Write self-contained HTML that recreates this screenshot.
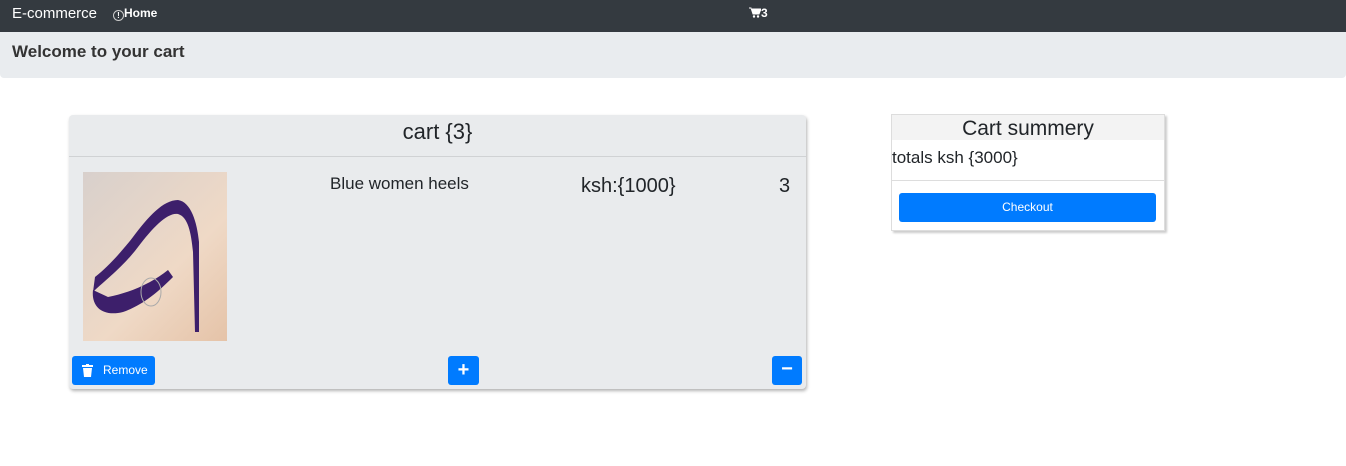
<!DOCTYPE html>
<html><head><style>
*{box-sizing:border-box;margin:0;padding:0}
body{width:1346px;height:466px;background:#fff;font-family:"Liberation Sans",sans-serif;color:#212529;position:relative;overflow:hidden}
.nav{position:absolute;left:0;top:0;width:1346px;height:32px;background:#343a40;color:#fff}
.abs{position:absolute}
.btn{position:absolute;background:#007bff;border-radius:3px;color:#fff}
</style></head><body>
<div class="nav">
<div class="abs" style="left:12px;top:5px;font-size:15px">E-commerce</div>
<div class="abs" style="left:113px;top:6px;font-size:12px;font-weight:bold"><span style="display:inline-block;width:11px;height:11px;border:1px solid #ccc;border-radius:50%;font-size:8px;line-height:9px;text-align:center;vertical-align:-1px">!</span>Home</div>
<div class="abs" style="left:749px;top:6px;font-size:12px;font-weight:bold"><svg width="12" height="11" viewBox="0 0 12 11" style="vertical-align:-1px"><path d="M0 1h2l2 6h6l2-5H3" fill="#fff" stroke="#fff"/><circle cx="5" cy="9.5" r="1.2" fill="#fff"/><circle cx="9" cy="9.5" r="1.2" fill="#fff"/></svg>3</div>
</div>
<div class="abs" style="left:0;top:32px;width:1346px;height:46px;background:#e9ecef;border-radius:0 0 4px 4px"></div>
<div class="abs" style="left:12px;top:42px;font-size:17px;font-weight:bold;color:#333">Welcome to your cart</div>

<div class="abs" style="left:69px;top:115px;width:737px;height:274px;background:#e9ebed;border-radius:4px;box-shadow:1px 2px 3px rgba(0,0,0,.3)">
<div style="height:42px;border-bottom:1px solid #d0d2d4;text-align:center;font-size:22px;line-height:34px">cart {3}</div>
<div class="abs" style="left:14px;top:57px;width:144px;height:169px;background:linear-gradient(135deg,#d8d0cc,#efd9c6 60%,#e5c3a8)">
<svg width="144" height="169" viewBox="0 0 144 169"><path d="M10 120 C20 110 40 95 55 75 C70 55 85 40 95 42 C105 45 108 60 110 80 L112 160 L116 160 L116 70 C114 50 108 30 95 28 C80 28 65 45 50 65 C40 78 25 95 12 105 Z" fill="#3d1f6b"/><path d="M10 118 C8 135 20 145 40 140 C60 133 75 120 90 105 L85 98 C70 110 50 120 25 125 Z" fill="#3d1f6b"/><ellipse cx="68" cy="120" rx="10" ry="14" fill="none" stroke="#aaa"/></svg></div>
<div class="abs" style="left:261px;top:59px;font-size:17px">Blue women heels</div>
<div class="abs" style="left:512px;top:60px;font-size:20px">ksh:{1000}</div>
<div class="abs" style="left:710px;top:60px;font-size:20px">3</div>
<div class="btn" style="left:3px;top:241px;width:83px;height:29px;font-size:12px;line-height:29px;padding-left:31px"><svg class="abs" style="left:10px;top:8px" width="11" height="13" viewBox="0 0 11 13"><rect x="0" y="1" width="11" height="2" fill="#fff"/><rect x="4" y="0" width="3" height="2" fill="#fff"/><path d="M1 4h9l-1 9H2z" fill="#fff"/></svg>Remove</div>
<div class="btn" style="left:379px;top:241px;width:31px;height:29px;font-size:20px;font-weight:bold;line-height:28px;text-align:center">+</div>
<div class="btn" style="left:703px;top:241px;width:30px;height:29px;font-size:20px;font-weight:bold;line-height:27px;text-align:center">−</div>
</div>

<div class="abs" style="left:891px;top:114px;width:274px;height:117px;background:#fff;border:1px solid #ddd;box-shadow:2px 2px 2px #ccc">
<div style="height:25px;background:#f3f3f3;text-align:center;font-size:21px;line-height:28px">Cart summery</div>
<div style="height:41px;font-size:17px;line-height:36px;border-bottom:1px solid #ddd">totals ksh {3000}</div>
<div class="btn" style="left:7px;top:78px;width:257px;height:29px;font-size:12px;line-height:29px;text-align:center">Checkout</div>
</div>
</body></html>
